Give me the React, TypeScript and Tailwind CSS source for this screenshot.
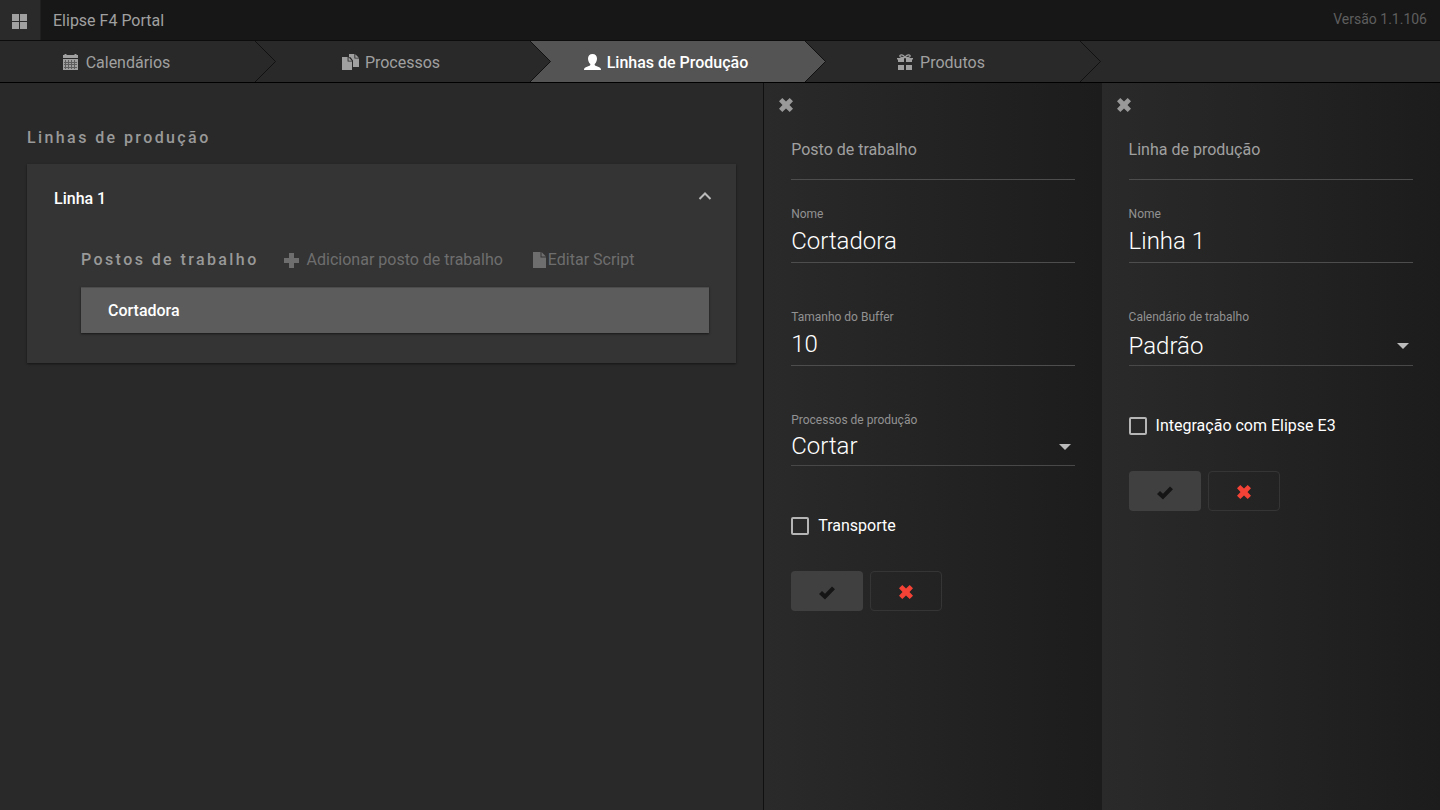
import React, { useState } from "react";

type IconName = "calendar" | "files" | "user" | "gift";

interface Step {
    name: string;
    icon: IconName;
}

const steps: Step[] = [
    { name: "Calendários", icon: "calendar" },
    { name: "Processos", icon: "files" },
    { name: "Linhas de Produção", icon: "user" },
    { name: "Produtos", icon: "gift" },
];

function StepIcon({ name }: { name: IconName }) {
    return (
        <svg className="h-4 w-[17px] shrink-0" viewBox="0 0 17 16" fill="currentColor" aria-hidden="true">
            {name === "calendar" && (
                <>
                    <path d="M0 1h1.500V0h2v1h8V0h2v1H15v3H0z" />
                    <path d="M0 5h15v11H0z" opacity=".45" />
                    {[6, 9, 11, 14].map((y) =>
                        [0, 3, 6, 9, 12].map((x) => (
                            <rect key={`${x}-${y}`} x={x} y={y} width={x === 12 ? 3 : 2} height={y === 6 || y === 11 ? 2 : 1} />
                        ))
                    )}
                    <path d="M0 5h15v1H0zM0 6h1v10H0zM14 6h1v10h-1zM0 15h15v1H0z" />
                </>
            )}
            {name === "files" && (
                <>
                    <path d="M7 0h5.400v4.600H17V13h-6V6.600L8.600 3.200H7zM13.300.3L16.800 3.700H13.300z" />
                    <path d="M0 3h5.600v4.500H10V16H0zM6.500 3.300L9.900 6.700H6.500z" />
                </>
            )}
            {name === "user" && (
                <path d="M8.500 0c2.800 0 4.500 1.800 4.500 4.600 0 2.200-.8 4.300-2.300 5.400-.3 1 .3 1.700 1.500 2.100l3 1.100c1.200.5 1.800 1.200 1.800 2.800H0c0-1.600.6-2.300 1.800-2.800l3-1.100c1.200-.4 1.800-1.100 1.500-2.100C4.800 8.900 4 6.800 4 4.600 4 1.800 5.700 0 8.500 0z" />
            )}
            {name === "gift" && (
                <>
                    <path
                        d="M8 3.600C7 1.500 5.500.7 4.100.8 2.700.9 2.500 2.300 3.500 3.100c.8.6 2.400.7 4.500.5zM8 3.600c1-2.100 2.500-2.900 3.900-2.800 1.400.1 1.600 1.500.6 2.300-.8.6-2.400.7-4.500.5z"
                        fill="none"
                        stroke="currentColor"
                        strokeWidth="1.300"
                    />
                    <path d="M0 4h7v4H1V5.500H0zM9 4h7v1.500h-1V8H9zM1 11h6v5H1zM9 11h6v5H9z" />
                </>
            )}
        </svg>
    );
}

function CrossIcon() {
    return (
        <svg className="h-[14px] w-[14px]" viewBox="0 0 14 14" fill="currentColor" aria-hidden="true">
            <path d="M3.300 0L7 3.500 10.700 0 14 3.300 10.500 7l3.500 3.700-3.300 3.300L7 10.500 3.300 14 0 10.700 3.500 7 0 3.300z" />
        </svg>
    );
}

function CheckIcon() {
    return (
        <svg className="h-[14px] w-4" viewBox="0 0 16 14" fill="currentColor" aria-hidden="true">
            <path d="M0 8l3-3 3 2.700L13 .5l3 2.800L6 13.500z" />
        </svg>
    );
}

function Steps() {
    const [active, setActive] = useState("Linhas de Produção");

    return (
        <nav className="flex h-[42px] border-b border-black bg-[#292929]">
            {steps.map((step, i) => {
                const isActive = step.name === active;
                return (
                    <button
                        key={step.name}
                        type="button"
                        onClick={() => setActive(step.name)}
                        className={`
                            relative flex shrink-0 items-center justify-center gap-1.5
                            ${i === 0 ? "w-[255px] pr-[22px]" : "w-[275px] pr-[3px]"}
                            ${isActive ? "bg-[#545454] font-medium text-white" : "bg-[#292929] text-[#a0a0a0]"}
                        `}
                    >
                        <StepIcon name={step.icon} />
                        <span className="pt-0.5">{step.name}</span>
                        {/* Arrow head laid over the next step */}
                        <svg
                            className={`absolute top-0 left-full z-10 h-full w-[21px] ${isActive ? "text-[#545454]" : "text-[#292929]"}`}
                            viewBox="0 0 21 41"
                            aria-hidden="true"
                        >
                            <path d="M0 0L20.500 20.500 0 41z" fill="currentColor" />
                            <path d="M0 0L20.500 20.500 0 41" fill="none" stroke="#111" />
                        </svg>
                    </button>
                );
            })}
        </nav>
    );
}

function Panel({ title, divider, children }: { title: string; divider?: boolean; children: React.ReactNode }) {
    return (
        <section className={`bg-linear-to-r from-[#2a2a2a] to-[#1c1c1c] px-[27px] ${divider ? "border-l border-[#101010]" : ""}`}>
            <button type="button" aria-label="Fechar" className="-ml-3 mt-[15px] block text-[#999]">
                <CrossIcon />
            </button>
            <h2 className="mb-[26px] mt-[26px] border-b border-[#4d4d4d] pb-[17px] text-base/6 text-[#a0a0a0]">{title}</h2>
            {children}
        </section>
    );
}

interface FieldProps {
    id: string;
    label: string;
    value: string;
}

function TextField({ id, label, value }: FieldProps) {
    return (
        <div className="mb-[46px]">
            <label htmlFor={id} className="block text-xs/4 text-[#929292]">{label}</label>
            <input
                id={id}
                defaultValue={value}
                className="block h-[41px] w-full border-b border-[#4d4d4d] bg-transparent pb-0.5 text-2xl font-light text-white outline-none"
            />
        </div>
    );
}

function SelectField({ id, label, value, dense }: FieldProps & { dense?: boolean }) {
    return (
        <div className="mb-[51px]">
            <label htmlFor={id} className="block text-xs/4 text-[#929292]">{label}</label>
            <div className="relative">
                <select
                    id={id}
                    defaultValue={value}
                    className={`block w-full appearance-none border-b border-[#484848] bg-transparent text-2xl font-light text-white outline-none ${dense ? "h-[38px] pb-0.5" : "h-[41px] pt-0.5"}`}
                >
                    <option>{value}</option>
                </select>
                <svg
                    className="pointer-events-none absolute top-1/2 right-1 h-[6px] w-3 -translate-y-1/2 text-[#bbb]"
                    viewBox="0 0 12 6"
                    fill="currentColor"
                    aria-hidden="true"
                >
                    <path d="M0 0h12L6 6z" />
                </svg>
            </div>
        </div>
    );
}

function CheckField({ label }: { label: string }) {
    return (
        <label className="flex h-[18px] items-center gap-[9px] text-base text-white">
            <input
                type="checkbox"
                className="h-[18px] w-[18px] shrink-0 appearance-none rounded-[2px] border-2 border-[#b5b5b5] checked:bg-[#b5b5b5]"
            />
            {label}
        </label>
    );
}

function Actions() {
    return (
        <div className="mt-9 flex gap-[7px]">
            <button
                type="button"
                aria-label="Confirmar"
                className="flex h-10 w-[72px] items-center justify-center rounded-[4px] bg-[#404040] pt-1 text-[#151515]"
            >
                <CheckIcon />
            </button>
            <button
                type="button"
                aria-label="Cancelar"
                className="flex h-10 w-[72px] items-center justify-center rounded-[4px] border border-[#353535] pt-0.5 text-[#f44336]"
            >
                <CrossIcon />
            </button>
        </div>
    );
}

export default function App() {
    const [open, setOpen] = useState(true);

    return (
        <div className="flex min-h-screen flex-col bg-[#292929] font-['Roboto',sans-serif] text-base">
            <header className="flex h-[41px] items-stretch border-b border-[#0c0c0c] bg-[#171717]">
                <button
                    type="button"
                    aria-label="Menu"
                    className="flex w-[41px] items-center justify-center border-r border-[#202020] bg-[#2a2a2a] pt-0.5 pr-0.5 text-[#a0a0a0]"
                >
                    <svg className="h-[15px] w-[15px]" viewBox="0 0 15 15" fill="currentColor" aria-hidden="true">
                        <path d="M0 0h7v7H0zM8 0h7v7H8zM0 8h7v7H0zM8 8h7v7H8z" />
                    </svg>
                </button>
                <h1 className="ml-3 self-center pt-0.5 text-[#a0a0a0]">Elipse F4 Portal</h1>
                <span className="ml-auto mr-[13px] self-center pb-0.5 text-sm text-[#5e5e5e]">Versão 1.1.106</span>
            </header>

            <Steps />

            <main className="grid flex-1 grid-cols-[53fr_23.5fr_23.5fr]">
                <section className="p-[27px]">
                    <h2 className="mb-[14px] mt-4 text-base/6 font-medium tracking-[0.15em] text-[#999]">Linhas de produção</h2>

                    <div className="bg-[#343434] px-[27px] pt-4 pb-[30px] shadow-[0_1px_2px_#151515]">
                        <button
                            type="button"
                            aria-expanded={open}
                            onClick={() => setOpen(!open)}
                            className="flex h-9 w-full items-center justify-between pt-0.5 font-medium text-white"
                        >
                            Linha 1
                            <svg
                                className={`-mr-1 h-4 w-4 text-[#bbb] ${open ? "" : "rotate-180"}`}
                                viewBox="0 0 16 16"
                                fill="none"
                                stroke="currentColor"
                                strokeWidth="2"
                                aria-hidden="true"
                            >
                                <path d="M2.500 8L8 2.500 13.500 8" />
                            </svg>
                        </button>

                        {open && (
                            <div className="mt-8 pl-[27px]">
                                <div className="flex h-6 items-center">
                                    <h3 className="font-medium tracking-[0.15em] text-[#999]">Postos de trabalho</h3>
                                    <button type="button" className="ml-[25px] flex items-center gap-2 text-[#6e6e6e]">
                                        <svg className="h-[15px] w-[15px]" viewBox="0 0 15 15" fill="currentColor" aria-hidden="true">
                                            <path d="M5 0h5v5h5v5h-5v5H5v-5H0V5h5z" />
                                        </svg>
                                        Adicionar posto de trabalho
                                    </button>
                                    <button type="button" className="ml-[30px] flex items-center gap-0.5 text-[#6e6e6e]">
                                        <svg className="h-4 w-[13px]" viewBox="0 0 13 16" fill="currentColor" aria-hidden="true">
                                            <path d="M0 0h7.500v5.500H13V16H0zM8.500 0L13 4.500H8.500z" />
                                        </svg>
                                        Editar Script
                                    </button>
                                </div>
                                <button
                                    type="button"
                                    className="mt-[15px] block h-[46px] w-full border-t border-[#4c4c4c] bg-[#5c5c5c] px-[27px] text-left font-medium text-white shadow-[0_1px_2px_#181818]"
                                >
                                    Cortadora
                                </button>
                            </div>
                        )}
                    </div>
                </section>

                <Panel title="Posto de trabalho" divider>
                    <TextField id="posto-nome" label="Nome" value="Cortadora" />
                    <TextField id="posto-buffer" label="Tamanho do Buffer" value="10" />
                    <SelectField id="posto-processo" label="Processos de produção" value="Cortar" dense />
                    <CheckField label="Transporte" />
                    <Actions />
                </Panel>

                <Panel title="Linha de produção">
                    <TextField id="linha-nome" label="Nome" value="Linha 1" />
                    <SelectField id="linha-calendario" label="Calendário de trabalho" value="Padrão" />
                    <CheckField label="Integração com Elipse E3" />
                    <Actions />
                </Panel>
            </main>
        </div>
    );
}
